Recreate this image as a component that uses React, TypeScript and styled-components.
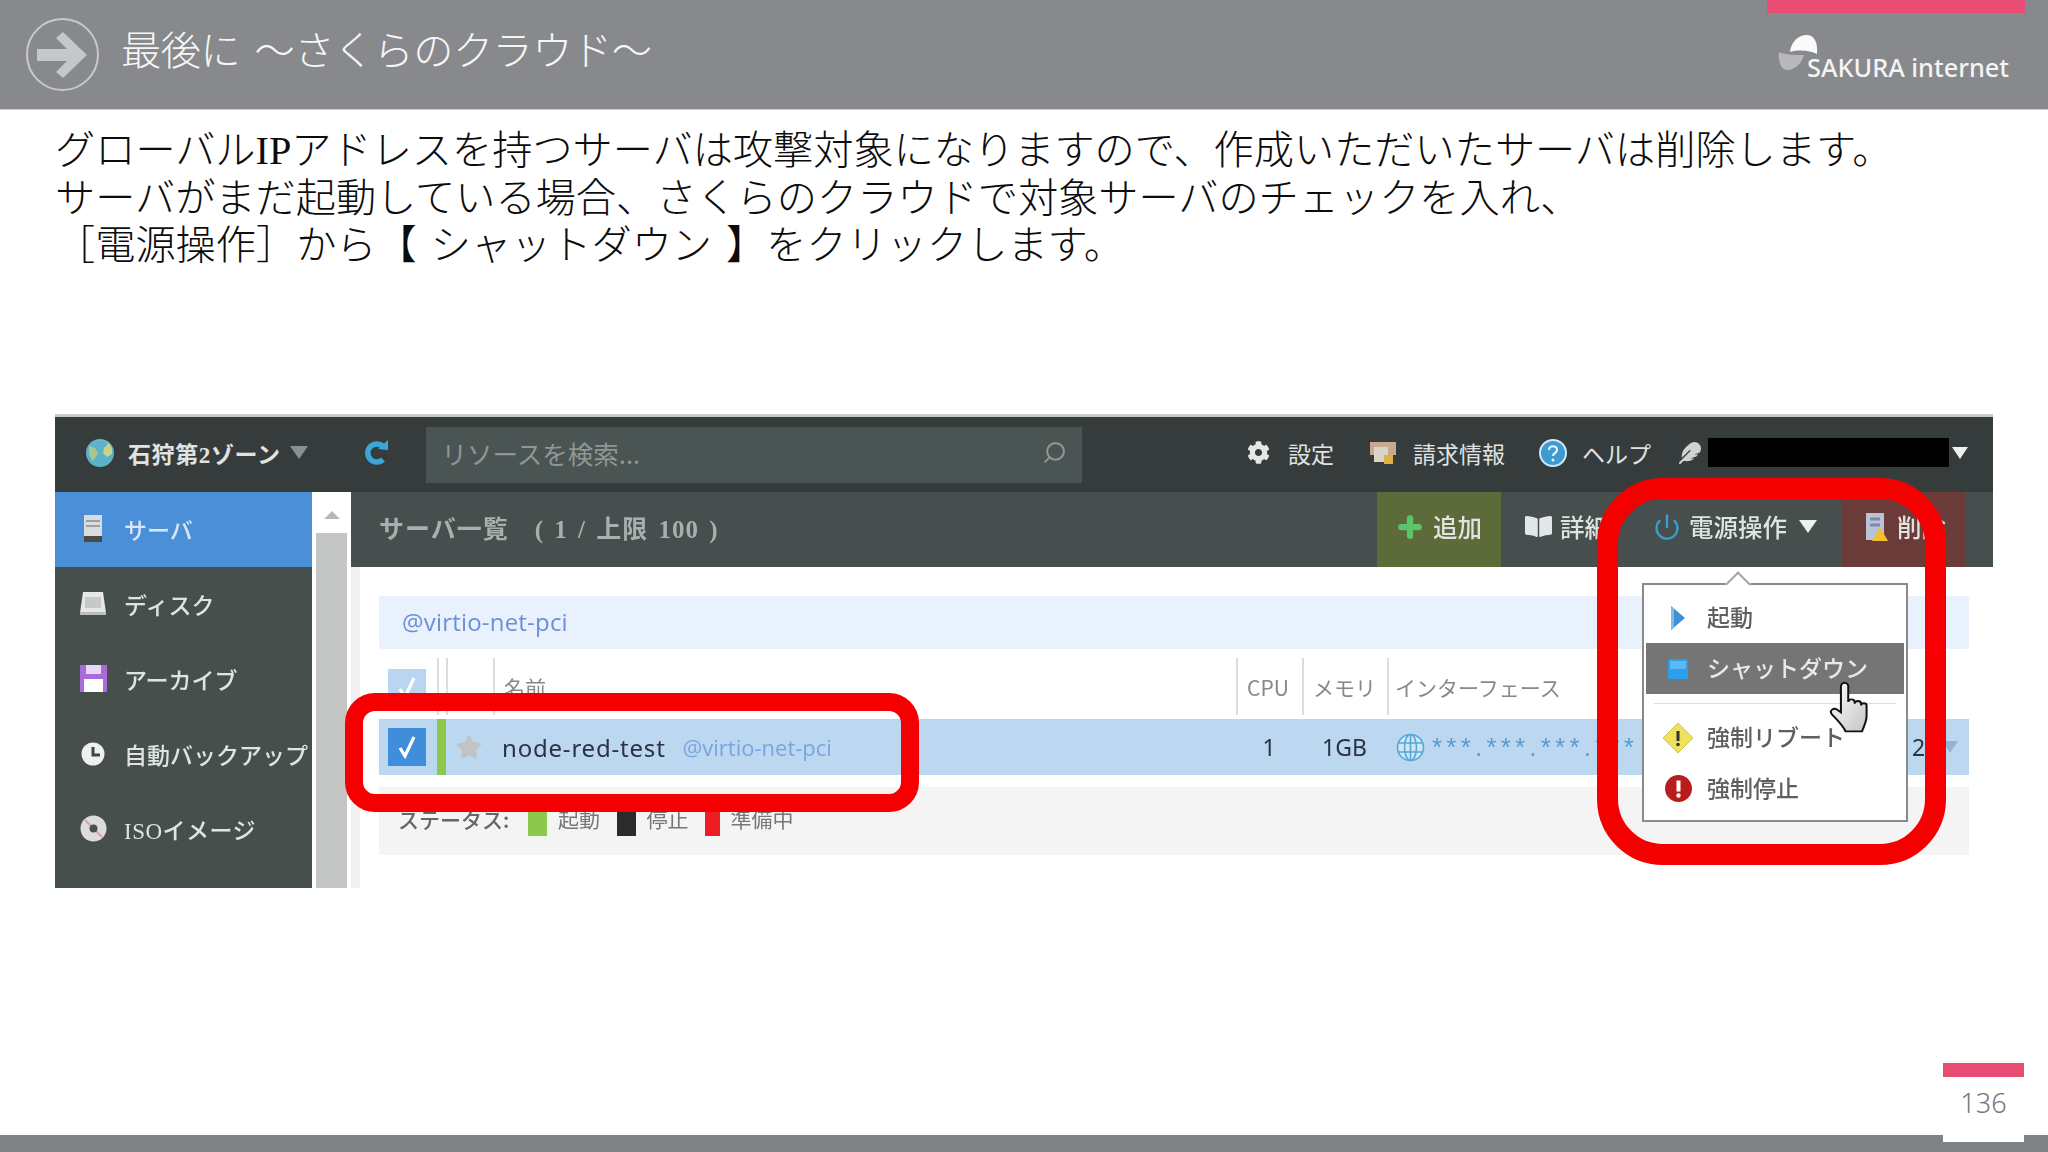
import React, { FC } from 'react';
import styled, { createGlobalStyle } from 'styled-components';
import { FaBookOpen, FaCog, FaFeather, FaStar } from 'react-icons/fa';
import { Plus, Power, Search } from 'lucide-react';

const sans = `"Noto Sans CJK JP", "Noto Sans", sans-serif`;
const serifLatin = `"Liberation Serif", "Noto Sans CJK JP", serif`;

const GlobalStyle = createGlobalStyle`
  html, body {
    margin: 0;
    padding: 0;
    background: #fff;
    overflow: hidden;
  }
`;

const Page = styled.div`
  width: 2048px;
  height: 1152px;
  display: flex;
  flex-direction: column;
  position: relative;
  font-family: ${sans};
  background: #fff;
  overflow: hidden;
`;

const Header = styled.header`
  height: 109px;
  flex: none;
  display: flex;
  justify-content: space-between;
  background: #87898c;
  border-bottom: 1px solid #c8c9cb;
  padding: 0 23px 0 26px;
`;

const HeaderLeft = styled.div`
  display: flex;
  align-items: center;
  gap: 22px;
  height: 109px;
`;

const HeaderTitle = styled.h1`
  margin: 0 0 14px;
  font-size: 40.2px;
  font-weight: 300;
  letter-spacing: -0.5px;
  word-spacing: 6px;
  color: #f6f6f6;
  white-space: pre;
`;

const HeaderRight = styled.div`
  width: 258px;
  display: flex;
  flex-direction: column;
`;

const PinkBar = styled.div`
  height: 13px;
  background: #ea4d73;
`;

const Logo = styled.div`
  display: flex;
  margin: 22px 0 0 11px;
  color: #f4f4f4;
  font-family: "Noto Sans", sans-serif;
  font-size: 25.3px;
  font-weight: 500;
  white-space: nowrap;
`;

const LogoText = styled.span`
  margin: 15px 0 0 -11px;
  line-height: 34px;
`;

const Main = styled.main`
  flex: 1;
  padding: 17px 0 0 55px;
`;

const Lead = styled.p`
  margin: 0;
  height: 287px;
  font-family: ${serifLatin};
  font-size: 40.2px;
  line-height: 47.7px;
  font-weight: 300;
  word-spacing: 4px;
  color: #0c0c0c;
  white-space: pre;
`;

const Shot = styled.section`
  width: 1938px;
  height: 471px;
  border-top: 3px solid #c9caca;
  position: relative;
  display: flex;
  flex-direction: column;
  font-size: 23px;
  filter: blur(0.45px);
`;

const TopBar = styled.div`
  height: 75px;
  flex: none;
  display: flex;
  align-items: center;
  padding: 0 25px 4px 31px;
  box-sizing: border-box;
  background: #363c3b;
  color: #e0e3e2;
`;

const ZoneName = styled.span`
  margin-left: 14px;
  font-family: ${serifLatin};
  font-weight: 700;
  letter-spacing: 0.6px;
  white-space: nowrap;
`;

const Triangle = styled.span<{ $color: string; $size: number; $before?: number }>`
  flex: none;
  width: 0;
  height: 0;
  margin-left: ${p => p.$before || 0}px;
  border-left: ${p => p.$size}px solid transparent;
  border-right: ${p => p.$size}px solid transparent;
  border-top: ${p => p.$size * 1.5}px solid ${p => p.$color};
`;

const RefreshSlot = styled.span`
  display: flex;
  margin: 0 37px 0 55px;
`;

const SearchBox = styled.div`
  width: 656px;
  height: 56px;
  flex: none;
  margin-top: 4px;
  display: flex;
  align-items: center;
  justify-content: space-between;
  padding: 0 15px 4px 16px;
  box-sizing: border-box;
  background: #4a5452;
  color: #8f9695;
  font-size: 25.5px;
`;

const MirroredSearch = styled(Search)`
  transform: scaleX(-1);
`;

const TopRight = styled.div`
  margin-left: auto;
  display: flex;
  align-items: center;
`;

const TopLink = styled.span<{ $gap: number; $after: number }>`
  display: flex;
  align-items: center;
  gap: ${p => p.$gap}px;
  margin-right: ${p => p.$after}px;
  white-space: nowrap;
`;

const BlackedOut = styled.div`
  width: 241px;
  height: 29px;
  background: #000;
  margin-right: 3px;
`;

const Body = styled.div`
  flex: 1;
  min-height: 0;
  display: flex;
`;

const Sidebar = styled.nav`
  width: 257px;
  flex: none;
  background: #464f4c;
`;

const SideItem = styled.div<{ $active?: boolean; $serif?: boolean }>`
  height: 75px;
  display: flex;
  align-items: center;
  gap: 15px;
  padding: 0 0 2px 22px;
  box-sizing: border-box;
  white-space: nowrap;
  background: ${p => (p.$active ? '#4a8fd8' : 'transparent')};
  color: ${p => (p.$active ? '#d8e6f5' : '#dfe3e2')};
  font-family: ${p => (p.$serif ? serifLatin : sans)};
  letter-spacing: ${p => (p.$serif ? '0.5px' : '0')};
  font-weight: 500;
`;

const SideIcon = styled.span`
  width: 32px;
  display: flex;
  justify-content: center;
  flex: none;
`;

const Scrollbar = styled.div`
  width: 39px;
  flex: none;
  display: flex;
  flex-direction: column;
  align-items: center;
  background: #fff;
`;

const ScrollUp = styled.div`
  height: 41px;
  display: flex;
  align-items: center;
  &::before {
    content: '';
    border-left: 8px solid transparent;
    border-right: 8px solid transparent;
    border-bottom: 8px solid #b5b8b7;
    margin-top: 4px;
  }
`;

const ScrollThumb = styled.div`
  width: 31px;
  flex: 1;
  background: #c4c6c5;
`;

const Content = styled.div`
  flex: 1;
  min-width: 0;
  display: flex;
  flex-direction: column;
`;

const Toolbar = styled.div`
  height: 75px;
  flex: none;
  display: flex;
  align-items: stretch;
  padding: 0 28px;
  background: #464f4d;
  color: #dfe3e2;
`;

const ListTitle = styled.div`
  flex: 1;
  display: flex;
  align-items: center;
  padding-bottom: 6px;
  font-family: ${serifLatin};
  font-size: 25px;
  font-weight: 700;
  letter-spacing: 1px;
  word-spacing: 3px;
  color: #a9aeae;
  white-space: pre;
`;

const ToolButton = styled.div<{ $width: number; $pad: number; $bg?: string }>`
  width: ${p => p.$width}px;
  flex: none;
  display: flex;
  align-items: center;
  gap: 8px;
  padding: 0 0 6px ${p => p.$pad}px;
  box-sizing: border-box;
  background: ${p => p.$bg || 'transparent'};
  font-size: 24.5px;
  white-space: nowrap;
  font-weight: 500;
`;

const ListArea = styled.div`
  flex: 1;
  min-height: 0;
  padding: 29px 24px 0 19px;
  border-left: 9px solid #f0f0f0;
  background: #fff;
  display: flex;
  flex-direction: column;
`;

const GroupRow = styled.div`
  height: 53px;
  flex: none;
  display: flex;
  align-items: center;
  padding: 0 0 2px 23px;
  box-sizing: border-box;
  border-radius: 3px;
  background: #e9f1fc;
  color: #6b8fd8;
  font-family: "Open Sans", sans-serif;
  font-size: 24px;
  letter-spacing: 0.2px;
`;

const columns = '58px 9px 47px 743px 66px 85px 1fr 69px';

const TableHead = styled.div`
  height: 57px;
  flex: none;
  margin: 9px 0 4px;
  display: grid;
  grid-template-columns: ${columns};
  font-size: 21px;
  color: #888;
`;

const HeadCell = styled.div<{ $rule?: boolean; $pad?: number }>`
  display: flex;
  align-items: center;
  padding: 0 ${p => p.$pad ?? 9}px;
  box-sizing: border-box;
  border-left: ${p => (p.$rule ? '2px solid #ddd' : '0')};
  white-space: nowrap;
`;

const Tick = styled.div<{ $faded?: boolean }>`
  width: 38px;
  height: 38px;
  flex: none;
  display: flex;
  align-items: center;
  justify-content: center;
  background: ${p => (p.$faded ? '#b9d5f0' : '#3f8ddb')};
`;

const HeadTick = styled(Tick)`
  margin-top: 2px;
`;

const ServerRow = styled.div`
  height: 56px;
  flex: none;
  display: grid;
  grid-template-columns: ${columns};
  align-items: center;
  background: #bcd7f0;
  color: #2c3344;
`;

const TickCell = styled.div`
  padding-left: 9px;
`;

const PowerStrip = styled.div`
  height: 56px;
  background: #8cc84b;
`;

const StarCell = styled.div`
  display: flex;
  padding-left: 10px;
  color: #c3c3c6;
`;

const NameCell = styled.div`
  display: flex;
  align-items: center;
  gap: 17px;
  padding-left: 9px;
  font-family: "Noto Sans", sans-serif;
  font-size: 24px;
  letter-spacing: 0.8px;
  white-space: nowrap;
`;

const NameTag = styled.span`
  color: #7ba3e0;
  font-family: "Open Sans", sans-serif;
  font-size: 22px;
  letter-spacing: 0;
`;

const NumCell = styled.div<{ $align?: string }>`
  text-align: ${p => p.$align || 'center'};
  font-family: "Noto Sans", sans-serif;
  font-size: 23px;
`;

const IfaceCell = styled.div`
  display: flex;
  align-items: center;
  gap: 7px;
  padding-left: 9px;
  overflow: hidden;
  white-space: nowrap;
  color: #5a9bcf;
  font-family: "Liberation Sans", sans-serif;
  font-size: 26px;
  letter-spacing: 4.200px;
`;

const EndCell = styled.div`
  display: flex;
  align-items: center;
  gap: 17px;
  font-family: "Noto Sans", sans-serif;
  font-size: 23px;
  padding-left: 12px;
`;

const StatusBar = styled.div`
  height: 68px;
  flex: none;
  margin-top: 12px;
  padding: 0 0 0 19px;
  display: flex;
  align-items: center;
  background: #f4f4f4;
  color: #777;
  font-size: 21px;
  white-space: nowrap;
`;

const StatusTitle = styled.span`
  width: 130px;
  font-weight: 500;
  color: #666;
  padding-bottom: 4px;
`;

const StatusItem = styled.span`
  width: 88.500px;
  display: flex;
  align-items: center;
  gap: 11px;
`;

const StatusLabel = styled.span`
  padding-bottom: 6px;
`;

const Swatch = styled.i<{ $color: string }>`
  width: 19px;
  height: 26px;
  margin-top: 4px;
  background: ${p => p.$color};
`;

const RedBox = styled.div<{ $left: number; $top: number; $w: number; $h: number; $border: number; $radius: number }>`
  position: absolute;
  left: ${p => p.$left}px;
  top: ${p => p.$top}px;
  width: ${p => p.$w}px;
  height: ${p => p.$h}px;
  box-sizing: border-box;
  border: ${p => p.$border}px solid #f40000;
  border-radius: ${p => p.$radius}px;
`;

const Menu = styled.div`
  position: absolute;
  left: 1587px;
  top: 166px;
  width: 266px;
  height: 239px;
  box-sizing: border-box;
  padding-top: 7px;
  border: 2px solid #8a8a8a;
  background: #fff;
  color: #666;
  &::before {
    content: '';
    position: absolute;
    left: 85px;
    top: -10px;
    width: 16px;
    height: 16px;
    background: #fff;
    border-left: 2px solid #a5a5a5;
    border-top: 2px solid #a5a5a5;
    transform: rotate(45deg);
  }
`;

const MenuItem = styled.div<{ $active?: boolean }>`
  height: 51px;
  margin: 0 2px;
  display: flex;
  align-items: center;
  gap: 13px;
  padding: 0 0 3px 16px;
  box-sizing: border-box;
  background: ${p => (p.$active ? '#757575' : 'transparent')};
  color: ${p => (p.$active ? '#e8e8e8' : '#5f5f5f')};
  position: relative;
  font-weight: 500;
  white-space: nowrap;
`;

const MenuIcon = styled.span`
  width: 32px;
  flex: none;
  margin-top: 3px;
  display: flex;
  justify-content: center;
`;

const MenuRule = styled.div`
  height: 1px;
  margin: 9px 10px 8px;
  background: #ddd;
`;

const Pointer = styled.svg`
  position: absolute;
  left: 1774px;
  top: 265px;
`;

const Footer = styled.footer`
  height: 17px;
  flex: none;
  background: #808386;
`;

const PageTab = styled.div`
  position: absolute;
  left: 1943px;
  top: 1063px;
  width: 81px;
  height: 79px;
  background: #fff;
  display: flex;
  flex-direction: column;
  align-items: center;
`;

const PageBar = styled.div`
  width: 100%;
  height: 14px;
  flex: none;
  background: #ea4d73;
`;

const PageNumber = styled.span`
  margin-top: 7px;
  font-family: "Noto Sans", sans-serif;
  font-size: 27px;
  font-weight: 300;
  line-height: 38px;
  color: #777;
`;

const ArrowBadge: FC = () => (
  <svg width="73" height="73" viewBox="0 0 73 73">
    <circle cx="36.5" cy="36.5" r="35.5" fill="#87898c" stroke="#c8c9cb" strokeWidth="2" />
    <path d="M11 31h30L30 20l7-6 24 23-24 23-7-6 11-11H11z" fill="#c6c7c9" />
  </svg>
);

const SakuraMark: FC = () => (
  <svg width="40" height="37" viewBox="0 0 40 37">
    <path d="M12 17c1-9 7-17 17-17 8 0 11 9 10 19-6-3-17-5-27-2z" fill="#fafafa" />
    <path d="M1 17c6 3 17 3 25 3-2 8-9 15-17 15-6 0-9-9-8-18z" fill="#b8b9bb" />
  </svg>
);

const GlobeIcon: FC = () => (
  <svg width="28" height="28" viewBox="0 0 28 28">
    <circle cx="14" cy="14" r="14" fill="#5db2c9" />
    <path d="M10 2c5-2 10 0 12 3l-4 4-1 5 4 4 5-3c0-3 1-6-2-9C20 1 14 0 10 2z" fill="#c9d28d" />
    <path d="M3 7l6 2 3 5-3 5-2 3-4-6z" fill="#a8c78c" />
  </svg>
);

const RefreshIcon: FC = () => (
  <svg width="26" height="28" viewBox="0 0 26 28" fill="none">
    <path d="M20 20.500a9 9 0 1 1 0-13" stroke="#3ba7d8" strokeWidth="5.500" />
    <path d="M15 10l10 1V1z" fill="#3ba7d8" />
  </svg>
);

const TickMark: FC<{ size: number }> = ({ size }) => (
  <svg width={size * 0.75} height={size} viewBox="0 0 18 24" fill="none">
    <path d="M2 13l5 8L16 2" stroke="#fff" strokeWidth="3.200" />
  </svg>
);

const NetIcon: FC = () => (
  <svg width="29" height="29" viewBox="0 0 29 29" fill="none" stroke="#5aa7d4" strokeWidth="1.6">
    <circle cx="14.5" cy="14.5" r="13" fill="#cfe6f5" />
    <ellipse cx="14.5" cy="14.5" rx="6" ry="13" />
    <path d="M2 10h25M2 19h25M14.5 1.500v26" />
  </svg>
);

const BillIcon: FC = () => (
  <svg width="26" height="26" viewBox="0 0 26 26">
    <rect x="0" y="2" width="26" height="13" fill="#c9a98d" />
    <rect x="4" y="7" width="14" height="15" fill="#d8d4c8" />
    <path d="M14 15h9v9h-9z" fill="#e0b040" />
  </svg>
);

const HelpIcon: FC = () => (
  <svg width="28" height="28" viewBox="0 0 28 28">
    <circle cx="14" cy="14" r="13" fill="#3d9bd0" stroke="#cfe8f6" strokeWidth="2" />
    <path d="M10 11c0-5 8-5 8 0 0 3-4 3-4 6" fill="none" stroke="#e8f4fb" strokeWidth="2.200" />
    <circle cx="14" cy="21" r="1.500" fill="#e8f4fb" />
  </svg>
);

const ServerIcon: FC = () => (
  <svg width="20" height="28" viewBox="0 0 20 28">
    <rect x="1" y="0" width="18" height="21" fill="#d9dde0" />
    <path d="M3 6h14M3 11h14" stroke="#9aa0a4" strokeWidth="2" />
    <rect x="1" y="21" width="18" height="6" fill="#4b4b45" />
  </svg>
);

const DiskIcon: FC = () => (
  <svg width="26" height="24" viewBox="0 0 26 24">
    <path d="M3 0h20l3 21H0z" fill="#e6e8e8" />
    <rect x="5" y="5" width="16" height="11" fill="#c5c9c9" />
    <rect x="0" y="20" width="26" height="3" fill="#bbbfbf" />
  </svg>
);

const FloppyIcon: FC = () => (
  <svg width="27" height="27" viewBox="0 0 27 27">
    <rect width="27" height="27" fill="#a86bd8" />
    <rect x="6" y="0" width="15" height="9" fill="#e8d8f5" />
    <rect x="4" y="14" width="19" height="13" fill="#fff" />
  </svg>
);

const ClockIcon: FC = () => (
  <svg width="24" height="24" viewBox="0 0 24 24">
    <circle cx="12" cy="12" r="11.500" fill="#eff1f1" />
    <path d="M12 5v8h7" fill="none" stroke="#3e4644" strokeWidth="3" />
  </svg>
);

const DiscIcon: FC = () => (
  <svg width="27" height="27" viewBox="0 0 27 27">
    <circle cx="13.500" cy="13.500" r="13" fill="#dcdcdc" />
    <path d="M5 5l7 7M16 16l6 6" stroke="#d9a3a3" strokeWidth="2" />
    <circle cx="13.500" cy="13.500" r="4" fill="#4a504e" />
  </svg>
);

const DeleteIcon: FC = () => (
  <svg width="24" height="30" viewBox="0 0 24 30">
    <rect x="1" y="1" width="18" height="27" fill="#b9c3d8" />
    <path d="M5 7h10M5 13h10" stroke="#7d88a8" strokeWidth="3" />
    <path d="M15 15l8 14H7z" fill="#f0c030" />
  </svg>
);

const PlayIcon: FC = () => (
  <svg width="14" height="24" viewBox="0 0 14 24">
    <path d="M0 0l14 12L0 24z" fill="#3d8fd9" />
    <path d="M0 0l3 3v18l-3 3z" fill="#85b8e4" />
  </svg>
);

const StopIcon: FC = () => (
  <svg width="20" height="20" viewBox="0 0 20 20">
    <rect width="20" height="20" rx="1.500" fill="#2aa0ec" />
    <rect x="2" y="2" width="16" height="8" fill="#5cb9f2" />
  </svg>
);

const WarnIcon: FC = () => (
  <svg width="30" height="30" viewBox="0 0 30 30">
    <path d="M15 0l15 15-15 15L0 15z" fill="#efe25a" stroke="#c9c558" />
    <rect x="13.500" y="8" width="3" height="10" fill="#333" />
    <circle cx="15" cy="21.500" r="1.800" fill="#333" />
  </svg>
);

const ErrorIcon: FC = () => (
  <svg width="27" height="27" viewBox="0 0 27 27">
    <circle cx="13.500" cy="13.500" r="13.500" fill="#b91c1c" />
    <rect x="11.500" y="5.500" width="4" height="11" fill="#fff" />
    <circle cx="13.500" cy="20.500" r="2.200" fill="#fff" />
  </svg>
);

const App: FC = () => (
  <Page>
    <GlobalStyle />
    <Header>
      <HeaderLeft>
        <ArrowBadge />
        <HeaderTitle>最後に ～さくらのクラウド～</HeaderTitle>
      </HeaderLeft>
      <HeaderRight>
        <PinkBar />
        <Logo>
          <SakuraMark />
          <LogoText>SAKURA internet</LogoText>
        </Logo>
      </HeaderRight>
    </Header>

    <Main>
      <Lead>
        {'グローバルIPアドレスを持つサーバは攻撃対象になりますので、作成いただいたサーバは削除します。\n'}
        {'サーバがまだ起動している場合、さくらのクラウドで対象サーバのチェックを入れ、\n'}
        {'［電源操作］から【 シャットダウン 】をクリックします。'}
      </Lead>

      <Shot>
        <TopBar>
          <GlobeIcon />
          <ZoneName>石狩第2ゾーン</ZoneName>
          <Triangle $color="#8a9090" $size={9} $before={9} />
          <RefreshSlot>
            <RefreshIcon />
          </RefreshSlot>
          <SearchBox>
            <span>リソースを検索...</span>
            <MirroredSearch size={25} />
          </SearchBox>
          <TopRight>
            <TopLink $gap={18} $after={36}>
              <FaCog size={23} color="#e6e6e6" />
              設定
            </TopLink>
            <TopLink $gap={17} $after={34}>
              <BillIcon />
              請求情報
            </TopLink>
            <TopLink $gap={15} $after={28}>
              <HelpIcon />
              ヘルプ
            </TopLink>
            <TopLink $gap={7} $after={0}>
              <FaFeather size={22} color="#cfd3d2" />
              <BlackedOut />
            </TopLink>
            <Triangle $color="#f0f0f0" $size={8} />
          </TopRight>
        </TopBar>

        <Body>
          <Sidebar>
            <SideItem $active>
              <SideIcon><ServerIcon /></SideIcon>
              サーバ
            </SideItem>
            <SideItem>
              <SideIcon><DiskIcon /></SideIcon>
              ディスク
            </SideItem>
            <SideItem>
              <SideIcon><FloppyIcon /></SideIcon>
              アーカイブ
            </SideItem>
            <SideItem>
              <SideIcon><ClockIcon /></SideIcon>
              自動バックアップ
            </SideItem>
            <SideItem $serif>
              <SideIcon><DiscIcon /></SideIcon>
              ISOイメージ
            </SideItem>
          </Sidebar>
          <Scrollbar>
            <ScrollUp />
            <ScrollThumb />
          </Scrollbar>

          <Content>
            <Toolbar>
              <ListTitle>サーバ一覧　( 1 / 上限 100 )</ListTitle>
              <ToolButton $width={124} $pad={18} $bg="#5d6b3a">
                <Plus size={30} strokeWidth={5} color="#5cc46a" />
                追加
              </ToolButton>
              <ToolButton $width={114} $pad={24}>
                <FaBookOpen size={27} color="#e4e7ea" />
                詳細
              </ToolButton>
              <ToolButton $width={227} $pad={38}>
                <Power size={28} strokeWidth={2} color="#3b9ed0" />
                電源操作
                <Triangle $color="#f0f0f0" $size={9} $before={4} />
              </ToolButton>
              <ToolButton $width={123} $pad={23} $bg="#6a3b38">
                <DeleteIcon />
                削除
              </ToolButton>
            </Toolbar>

            <ListArea>
              <GroupRow>@virtio-net-pci</GroupRow>
              <TableHead>
                <HeadCell>
                  <HeadTick $faded><TickMark size={24} /></HeadTick>
                </HeadCell>
                <HeadCell $rule />
                <HeadCell $rule />
                <HeadCell $rule>名前</HeadCell>
                <HeadCell $rule>CPU</HeadCell>
                <HeadCell $rule>メモリ</HeadCell>
                <HeadCell $rule $pad={6}>インターフェース</HeadCell>
                <HeadCell />
              </TableHead>
              <ServerRow>
                <TickCell>
                  <Tick><TickMark size={24} /></Tick>
                </TickCell>
                <PowerStrip />
                <StarCell><FaStar size={26} /></StarCell>
                <NameCell>
                  node-red-test
                  <NameTag>@virtio-net-pci</NameTag>
                </NameCell>
                <NumCell>1</NumCell>
                <NumCell>1GB</NumCell>
                <IfaceCell>
                  <NetIcon />
                  ***.***.***.***
                </IfaceCell>
                <EndCell>
                  2
                  <Triangle $color="#8fb5d6" $size={8} />
                </EndCell>
              </ServerRow>
              <StatusBar>
                <StatusTitle>ステータス:</StatusTitle>
                <StatusItem><Swatch $color="#8cc84b" /><StatusLabel>起動</StatusLabel></StatusItem>
                <StatusItem><Swatch $color="#2b2b2b" /><StatusLabel>停止</StatusLabel></StatusItem>
                <StatusItem><Swatch $color="#ee1c25" /><StatusLabel>準備中</StatusLabel></StatusItem>
              </StatusBar>
            </ListArea>
          </Content>
        </Body>

        <RedBox $left={290} $top={276} $w={574} $h={119} $border={18} $radius={30} />
        <RedBox $left={1542} $top={61} $w={349} $h={387} $border={21} $radius={66} />

        <Menu>
          <MenuItem>
            <MenuIcon><PlayIcon /></MenuIcon>
            起動
          </MenuItem>
          <MenuItem $active>
            <MenuIcon><StopIcon /></MenuIcon>
            シャットダウン
          </MenuItem>
          <MenuRule />
          <MenuItem>
            <MenuIcon><WarnIcon /></MenuIcon>
            強制リブート
          </MenuItem>
          <MenuItem>
            <MenuIcon><ErrorIcon /></MenuIcon>
            強制停止
          </MenuItem>
        </Menu>

        <Pointer width="44" height="52" viewBox="0 0 24 30" preserveAspectRatio="none">
          <defs>
            <linearGradient id="hand" x1="0" y1="0" x2="1" y2="1">
              <stop offset="0" stopColor="#ffffff" />
              <stop offset="1" stopColor="#c4c4c4" />
            </linearGradient>
          </defs>
          <path
            d="M6.500 2.500a2 2 0 0 1 4 0v9c0-2 3.500-2 3.500 0v1c0-2 3.500-2 3.500 0v1c0-1.600 3-1.600 3 0v6c0 3.500-1.500 6-2.500 9H9c-1-3-4-6-7.500-10-1.500-2 1-4 3-2.500l2 1.500z"
            fill="url(#hand)"
            stroke="#111"
            strokeWidth="1.100"
          />
        </Pointer>
      </Shot>
    </Main>

    <Footer />
    <PageTab>
      <PageBar />
      <PageNumber>136</PageNumber>
    </PageTab>
  </Page>
);

export default App;
